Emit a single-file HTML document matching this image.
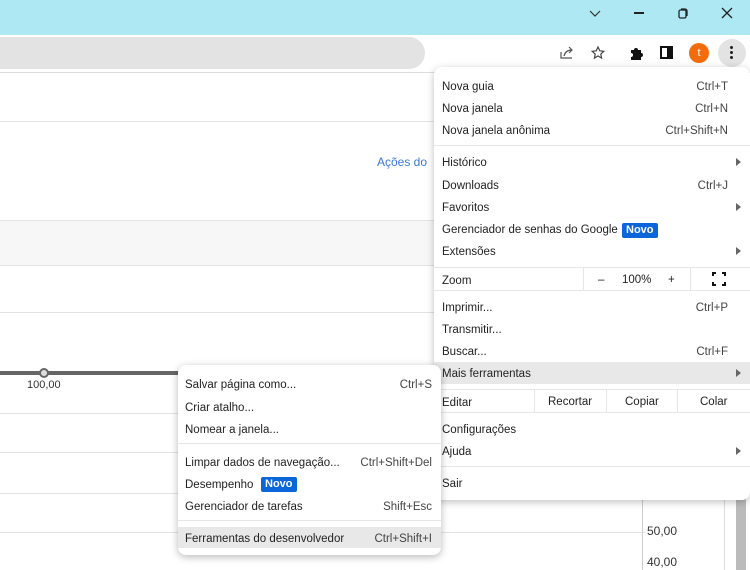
<!DOCTYPE html>
<html><head><meta charset="utf-8"><style>
*{margin:0;padding:0;box-sizing:border-box}
body{width:750px;height:570px;position:relative;overflow:hidden;background:#fff;font-family:"Liberation Sans",sans-serif;font-size:11.5px;color:#222}
.a{position:absolute}
.hl{position:absolute;left:0;height:1px;background:#e3e3e3}
.t{position:absolute;white-space:nowrap;line-height:16px;margin-top:1px}
.r{position:absolute;white-space:nowrap;line-height:16px;text-align:right;color:#444;margin-top:1px}
.sep{position:absolute;height:1px;background:#e6e6e6}
.arr{position:absolute;width:0;height:0;border-left:5px solid #666;border-top:4px solid transparent;border-bottom:4px solid transparent}
.badge{position:absolute;background:#0b67d9;color:#fff;font-weight:bold;font-size:11px;line-height:15px;padding:0 4px;border-radius:2px;margin-top:1px}
</style></head><body>
<div class="a" style="left:0;top:0;width:750px;height:35px;background:#aee8f2"></div>
<svg class="a" style="left:588px;top:8px" width="14" height="12"><path d="M2 3l5 5 5-5" stroke="#333" fill="none" stroke-width="1.2"/></svg>
<div class="a" style="left:634px;top:12px;width:10px;height:1.5px;background:#222"></div>
<svg class="a" style="left:676px;top:6px" width="14" height="14"><rect x="3" y="4" width="7" height="8" rx="1.5" stroke="#222" fill="none" stroke-width="1.3"/><path d="M5 3h4a2 2 0 0 1 2 2v5" stroke="#222" fill="none" stroke-width="1.3"/></svg>
<svg class="a" style="left:720px;top:6px" width="14" height="14"><path d="M2 2l10 10M12 2L2 12" stroke="#222" stroke-width="1.3"/></svg>
<div class="a" style="left:0;top:35px;width:750px;height:37px;background:#fff"></div>
<div class="a" style="left:-20px;top:37px;width:445px;height:32px;background:#e3e3e3;border-radius:16px"></div>
<svg class="a" style="left:559px;top:46px" width="16" height="14"><path d="M2 6v6h11" stroke="#555" fill="none" stroke-width="1.2"/><path d="M5 10c1-4 4-6 8-6M10 1l3 3-3 3" stroke="#555" fill="none" stroke-width="1.2"/></svg>
<svg class="a" style="left:590px;top:45px" width="16" height="16"><path d="M8 2l1.8 3.8 4 .5-3 2.8.8 4L8 11l-3.6 2.1.8-4-3-2.8 4-.5z" stroke="#444" fill="none" stroke-width="1.2"/></svg>
<svg class="a" style="left:628px;top:45px" width="16" height="16"><path d="M3 5h3a2 2 0 1 1 4 0h3v3a2 2 0 1 1 0 4v3H3v-3a2 2 0 1 0 0-4z" fill="#111"/></svg>
<div class="a" style="left:660px;top:46px;width:13px;height:13px;border:2px solid #111;border-right-width:6px"></div>
<div class="a" style="left:689px;top:43px;width:20px;height:20px;border-radius:50%;background:#f36c0c;color:#fff;font-size:11px;text-align:center;line-height:20px">t</div>
<div class="a" style="left:718px;top:39px;width:28px;height:28px;border-radius:50%;background:#e3e3e3"></div>
<div class="a" style="left:730px;top:46px;width:3px;height:3px;background:#222;border-radius:50%;box-shadow:0 5px 0 #222,0 10px 0 #222"></div>
<div class="hl" style="top:72px;width:750px;background:#ddd"></div>
<div class="hl" style="top:121px;width:440px"></div>
<div class="t" style="left:377px;top:153px;color:#3b78d8;font-size:12px">Ações do</div>
<div class="a" style="left:0;top:220px;width:440px;height:46px;background:#f7f7f7;border-top:1px solid #e3e3e3;border-bottom:1px solid #e3e3e3"></div>
<div class="hl" style="top:312px;width:440px"></div>
<div class="a" style="left:0;top:371px;width:180px;height:4px;background:#666"></div>
<div class="a" style="left:39px;top:368px;width:10px;height:10px;border-radius:50%;background:#ddd;border:2px solid #666"></div>
<div class="t" style="left:27px;top:376px;color:#333;font-size:11px">100,00</div>
<div class="hl" style="top:413px;width:180px"></div>
<div class="hl" style="top:452px;width:180px"></div>
<div class="hl" style="top:493px;width:180px"></div>
<div class="hl" style="top:532px;width:645px"></div>
<div class="a" style="left:642px;top:490px;width:1px;height:80px;background:#ccc"></div>
<div class="a" style="left:724px;top:490px;width:1px;height:80px;background:#ddd"></div>
<div class="a" style="left:736px;top:490px;width:10px;height:80px;background:#bbb"></div>
<div class="t" style="left:647px;top:522px;color:#333;font-size:12px">50,00</div>
<div class="t" style="left:647px;top:553px;color:#333;font-size:12px">40,00</div>
<div class="a" style="left:434px;top:67px;width:316px;height:433px;background:#fff;border-radius:8px;box-shadow:0 2px 8px rgba(0,0,0,.25)"></div>
<div class="t" style="left:442px;top:78px">Nova guia</div><div class="r" style="right:22px;top:78px">Ctrl+T</div>
<div class="t" style="left:442px;top:100px">Nova janela</div><div class="r" style="right:22px;top:100px">Ctrl+N</div>
<div class="t" style="left:442px;top:122px">Nova janela anônima</div><div class="r" style="right:22px;top:122px">Ctrl+Shift+N</div>
<div class="sep" style="left:434px;width:316px;top:145px"></div>
<div class="t" style="left:442px;top:154px">Histórico</div><div class="arr" style="left:736px;top:158px"></div>
<div class="t" style="left:442px;top:177px">Downloads</div><div class="r" style="right:22px;top:177px">Ctrl+J</div>
<div class="t" style="left:442px;top:199px">Favoritos</div><div class="arr" style="left:736px;top:203px"></div>
<div class="t" style="left:442px;top:221px">Gerenciador de senhas do Google</div><div class="badge" style="left:622px;top:222px">Novo</div>
<div class="t" style="left:442px;top:243px">Extensões</div><div class="arr" style="left:736px;top:247px"></div>
<div class="sep" style="left:434px;width:316px;top:267px"></div>
<div class="t" style="left:442px;top:272px">Zoom</div>
<div class="a" style="left:583px;top:268px;width:1px;height:22px;background:#e6e6e6"></div>
<div class="a" style="left:690px;top:268px;width:1px;height:22px;background:#e6e6e6"></div>
<div class="t" style="left:598px;top:271px">–</div><div class="t" style="left:622px;top:271px">100%</div><div class="t" style="left:668px;top:271px">+</div>
<svg class="a" style="left:712px;top:272px" width="14" height="14"><path d="M1 4V1h3M10 1h3v3M13 10v3h-3M4 13H1v-3" stroke="#111" fill="none" stroke-width="2"/></svg>
<div class="sep" style="left:434px;width:316px;top:290px"></div>
<div class="t" style="left:442px;top:299px">Imprimir...</div><div class="r" style="right:22px;top:299px">Ctrl+P</div>
<div class="t" style="left:442px;top:321px">Transmitir...</div>
<div class="t" style="left:442px;top:343px">Buscar...</div><div class="r" style="right:22px;top:343px">Ctrl+F</div>
<div class="a" style="left:434px;top:362px;width:316px;height:22px;background:#e8e8e8"></div>
<div class="t" style="left:442px;top:365px">Mais ferramentas</div><div class="arr" style="left:736px;top:369px"></div>
<div class="sep" style="left:434px;width:316px;top:389px"></div>
<div class="t" style="left:442px;top:394px">Editar</div>
<div class="a" style="left:534px;top:389px;width:1px;height:23px;background:#e6e6e6"></div>
<div class="a" style="left:606px;top:389px;width:1px;height:23px;background:#e6e6e6"></div>
<div class="a" style="left:677px;top:389px;width:1px;height:23px;background:#e6e6e6"></div>
<div class="t" style="left:548px;top:393px">Recortar</div><div class="t" style="left:625px;top:393px">Copiar</div><div class="t" style="left:700px;top:393px">Colar</div>
<div class="sep" style="left:434px;width:316px;top:412px"></div>
<div class="t" style="left:442px;top:421px">Configurações</div>
<div class="t" style="left:442px;top:443px">Ajuda</div><div class="arr" style="left:736px;top:447px"></div>
<div class="sep" style="left:434px;width:316px;top:466px"></div>
<div class="t" style="left:442px;top:475px">Sair</div>
<div class="a" style="left:178px;top:365px;width:263px;height:190px;background:#fff;border-radius:8px;box-shadow:0 2px 8px rgba(0,0,0,.28)"></div>
<div class="t" style="left:185px;top:376px">Salvar página como...</div><div class="r" style="left:360px;width:72px;top:376px">Ctrl+S</div>
<div class="t" style="left:185px;top:399px">Criar atalho...</div>
<div class="t" style="left:185px;top:421px">Nomear a janela...</div>
<div class="sep" style="left:178px;width:263px;top:443px"></div>
<div class="t" style="left:185px;top:454px">Limpar dados de navegação...</div><div class="r" style="left:340px;width:92px;top:454px">Ctrl+Shift+Del</div>
<div class="t" style="left:185px;top:476px">Desempenho</div><div class="badge" style="left:261px;top:476px">Novo</div>
<div class="t" style="left:185px;top:498px">Gerenciador de tarefas</div><div class="r" style="left:360px;width:72px;top:498px">Shift+Esc</div>
<div class="sep" style="left:178px;width:263px;top:520px"></div>
<div class="a" style="left:178px;top:527px;width:263px;height:21px;background:#e8e8e8"></div>
<div class="t" style="left:185px;top:530px">Ferramentas do desenvolvedor</div><div class="r" style="left:340px;width:92px;top:530px">Ctrl+Shift+I</div>
</body></html>
